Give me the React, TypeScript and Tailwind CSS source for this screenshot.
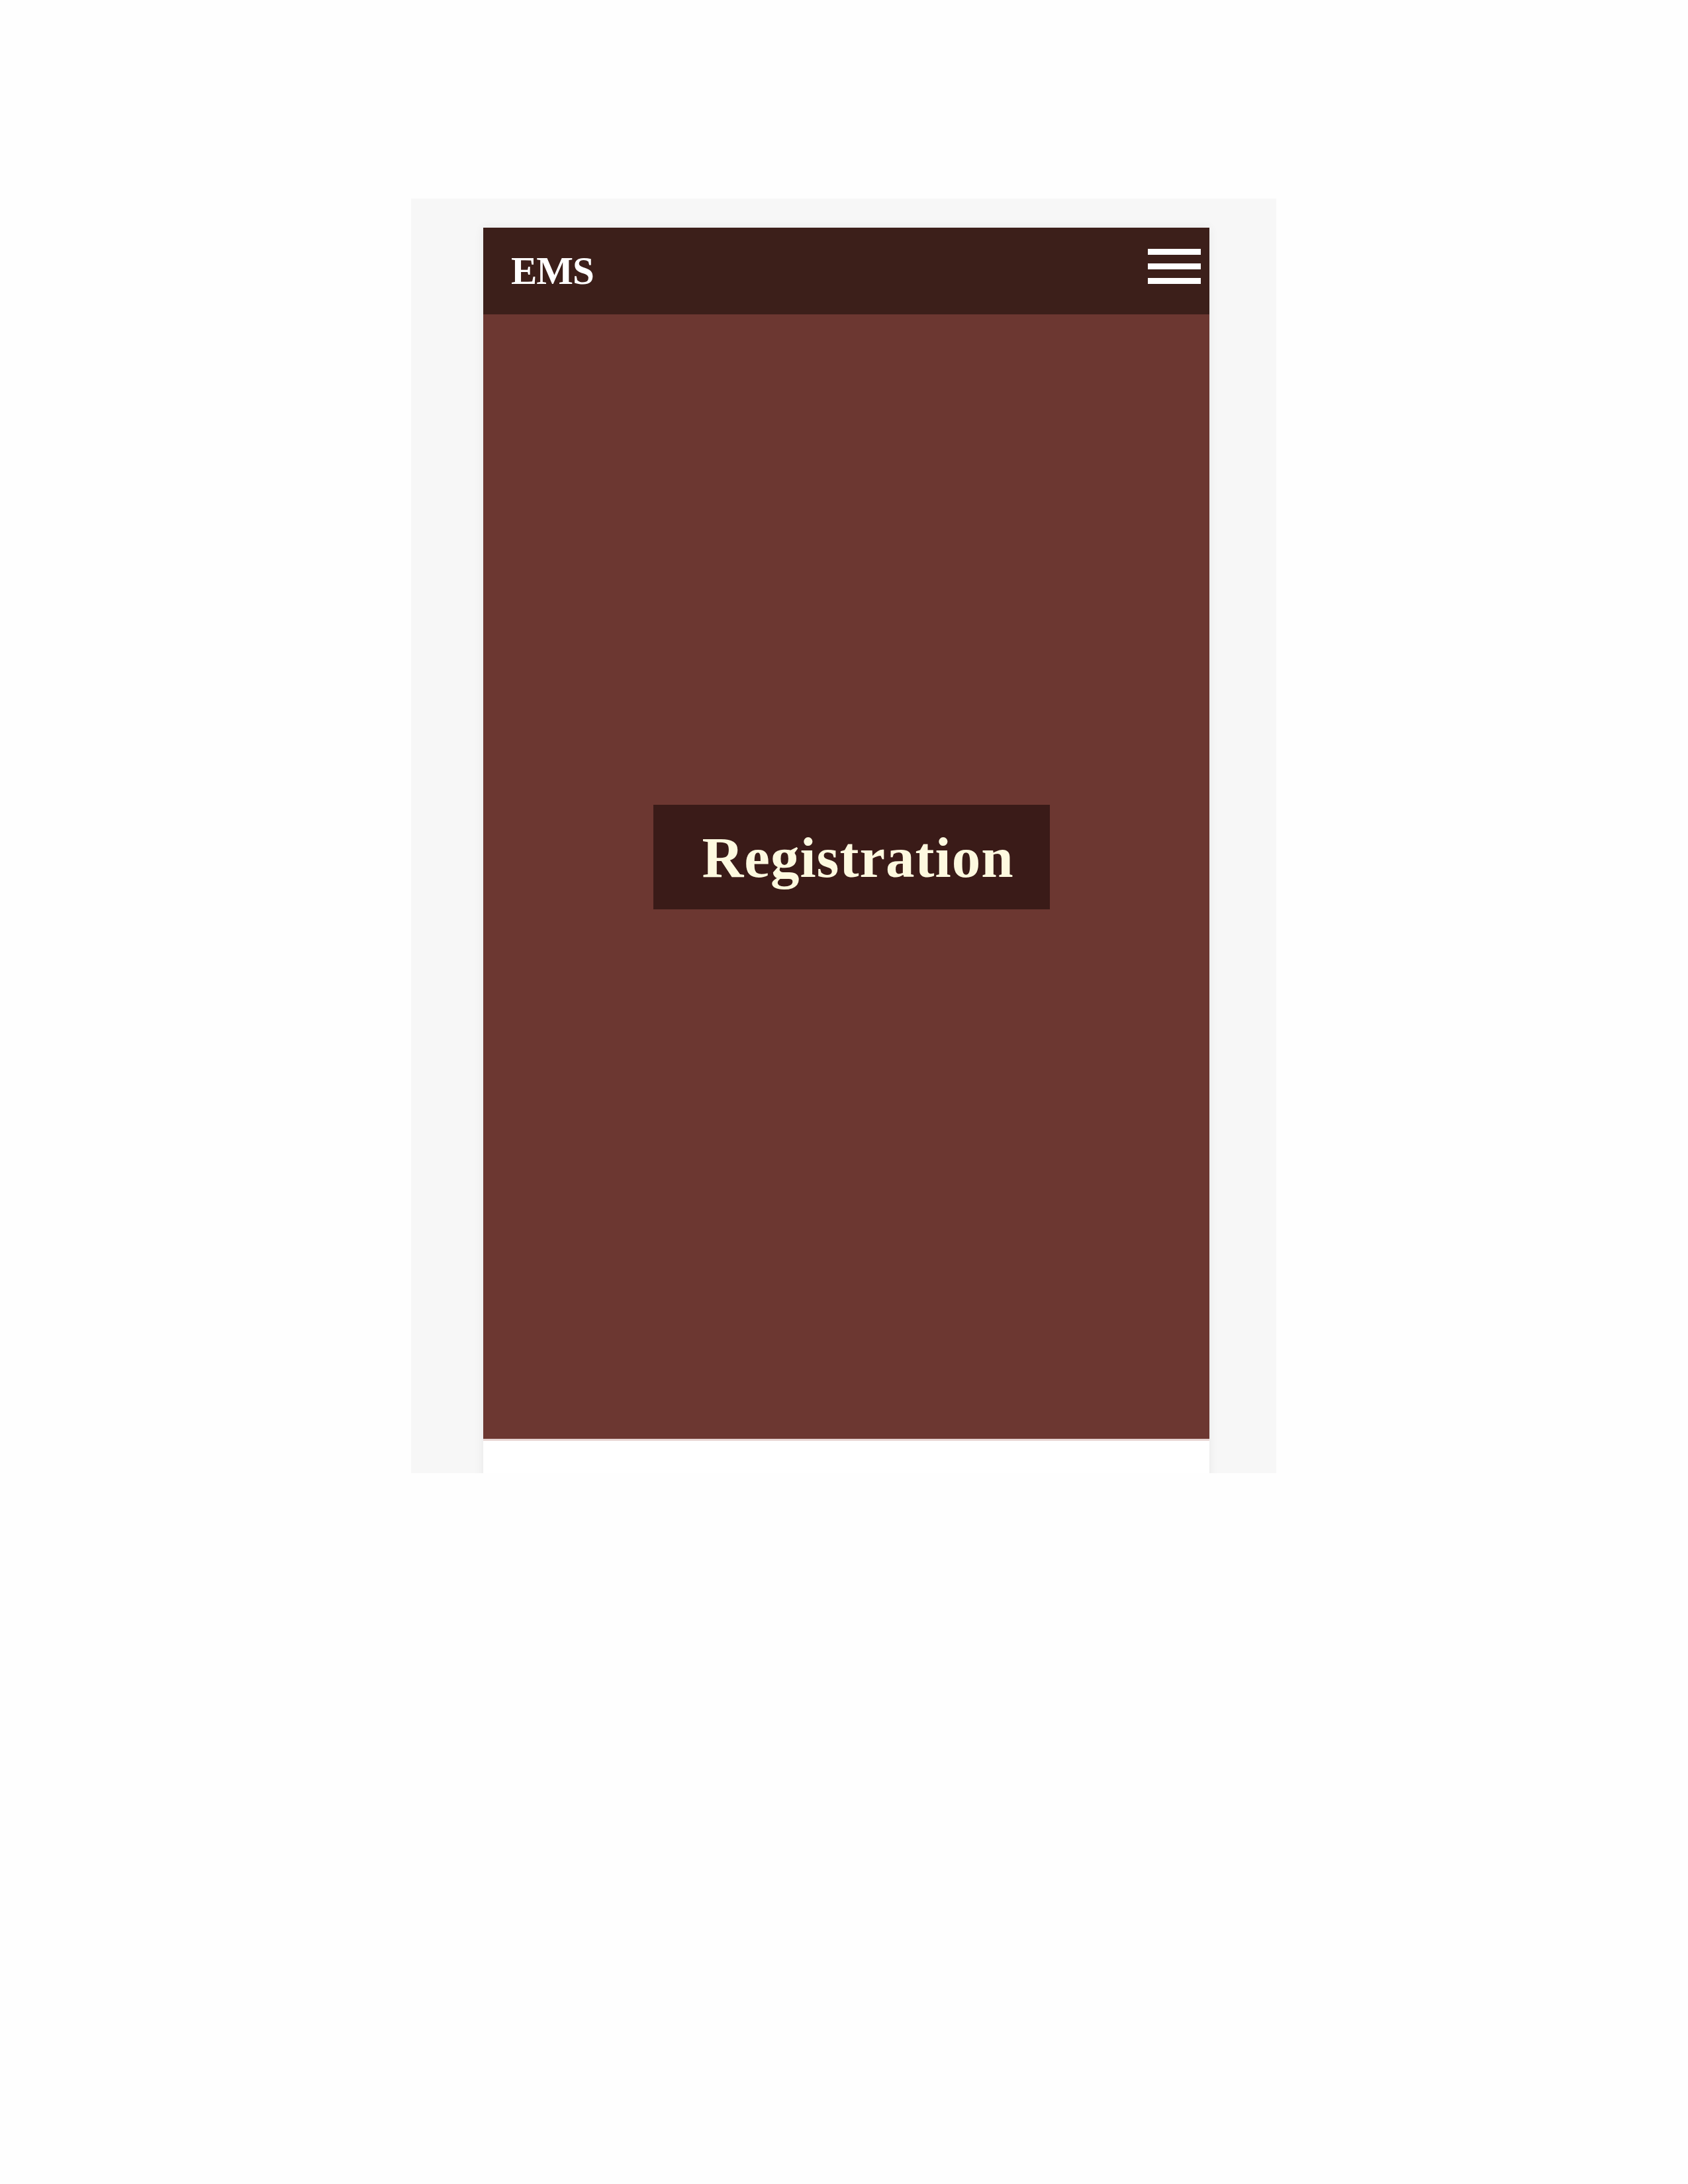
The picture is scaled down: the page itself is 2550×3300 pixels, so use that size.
export default function App() {
  return (
    <div className="min-h-[3300px] bg-[#fefefe] pt-[300px]">
      <div className="ml-[621px] w-[1307px] h-[1926px] bg-[#f7f7f7] pt-[44px] pl-[109px] overflow-hidden">
        <div className="w-[1097px] h-[1900px] bg-white shadow-[0_0_14px_rgba(0,0,0,0.07)] flex flex-col">
          <header className="h-[131px] shrink-0 bg-[#3c1f1a] flex items-start justify-between pl-[42px] pr-[13px]">
            <span className="mt-[36px] [font-family:'Liberation_Serif',serif] font-bold text-[59px] leading-none text-white tracking-[-1px]">
              EMS
            </span>
            <button className="mt-[32px] w-[80px] flex flex-col gap-[13px]" aria-label="menu">
              <span className="block h-[9px] bg-white" />
              <span className="block h-[9px] bg-white" />
              <span className="block h-[9px] bg-white" />
            </button>
          </header>
          <main className="h-[1702px] shrink-0 bg-[#6c3731] border-b-[3px] border-[#e6d3d1] flex items-center justify-center">
            <div className="ml-[15px] mb-[59px] w-[599px] h-[158px] bg-[#3a1b18] flex items-center pl-[74px]">
              <span className="[font-family:'Liberation_Serif',serif] font-bold text-[87px] leading-none text-[#fdf9df] tracking-[1px]">
                Registration
              </span>
            </div>
          </main>
        </div>
      </div>
    </div>
  );
}
